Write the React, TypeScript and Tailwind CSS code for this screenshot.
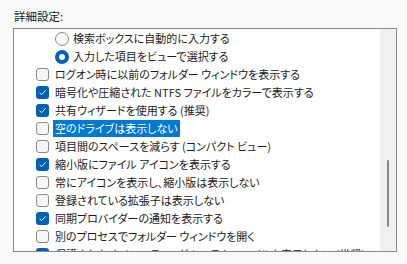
import type { ReactNode } from "react";

type Row =
  | { kind: "radio"; label: string; checked: boolean }
  | { kind: "check"; label: string; checked: boolean; selected?: boolean };

const rows: Row[] = [
  { kind: "radio", label: "検索ボックスに自動的に入力する", checked: false },
  { kind: "radio", label: "入力した項目をビューで選択する", checked: true },
  { kind: "check", label: "ログオン時に以前のフォルダー ウィンドウを表示する", checked: false },
  { kind: "check", label: "暗号化や圧縮された NTFS ファイルをカラーで表示する", checked: true },
  { kind: "check", label: "共有ウィザードを使用する (推奨)", checked: true },
  { kind: "check", label: "空のドライブは表示しない", checked: false, selected: true },
  { kind: "check", label: "項目間のスペースを減らす (コンパクト ビュー)", checked: false },
  { kind: "check", label: "縮小版にファイル アイコンを表示する", checked: true },
  { kind: "check", label: "常にアイコンを表示し、縮小版は表示しない", checked: false },
  { kind: "check", label: "登録されている拡張子は表示しない", checked: false },
  { kind: "check", label: "同期プロバイダーの通知を表示する", checked: true },
  { kind: "check", label: "別のプロセスでフォルダー ウィンドウを開く", checked: false },
  { kind: "check", label: "保護されたオペレーティング システム ファイルを表示しない (推奨)", checked: true },
];

function CheckBox({ checked }: { checked: boolean }) {
  if (checked) {
    return (
      <span className="flex h-[13px] w-[13px] shrink-0 items-center justify-center rounded-[3px] bg-[#005fb8]">
        <svg width="9" height="9" viewBox="0 0 9 9" fill="none">
          <path d="M1.8 4.9 L3.7 6.6 L7.3 2.6" stroke="white" strokeWidth="0.9" strokeLinecap="round" strokeLinejoin="round" />
        </svg>
      </span>
    );
  }
  return <span className="h-[13px] w-[13px] shrink-0 rounded-[3px] border border-[#8a8a8a] bg-[#f7f7f7]" />;
}

function Radio({ checked }: { checked: boolean }) {
  if (checked) {
    return (
      <span className="flex h-[14px] w-[14px] shrink-0 items-center justify-center rounded-full bg-[#005fb8]">
        <span className="h-[6px] w-[6px] rounded-full bg-white" />
      </span>
    );
  }
  return <span className="h-[14px] w-[14px] shrink-0 rounded-full border border-[#8a8a8a] bg-[#f7f7f7]" />;
}

function Label({ children, selected }: { children: ReactNode; selected?: boolean }) {
  return (
    <span
      className={`flex h-[17px] items-center whitespace-nowrap px-[2px] ${
        selected ? "bg-[#0078d4] text-white" : "text-[#1b1b1b]"
      }`}
    >
      {children}
    </span>
  );
}

export default function App() {
  return (
    <div
      className="h-[264px] w-[407px] overflow-hidden bg-[#f9f9f9] text-[11px] leading-none"
      style={{ fontFamily: '"Noto Sans CJK JP", "Noto Sans", sans-serif', fontFeatureSettings: '"palt"' }}
    >
      <p className="pl-[14px] pt-[11px] text-[11.5px] text-[#1b1b1b]">詳細設定:</p>
      <div className="ml-[13px] mt-[5px] flex h-[224px] w-[384px] border border-[#8a8a8a] bg-white">
        <ul className="min-w-0 flex-1 overflow-hidden pt-[1px]">
          {rows.map((row) =>
            row.kind === "radio" ? (
              <li key={row.label} className="flex h-[18px] items-center pl-[41px]">
                <Radio checked={row.checked} />
                <span className="w-[2px]" />
                <Label>{row.label}</Label>
              </li>
            ) : (
              <li key={row.label} className="flex h-[18px] items-center pl-[22px]">
                <CheckBox checked={row.checked} />
                <span className="w-[4px]" />
                <Label selected={row.selected}>{row.label}</Label>
              </li>
            ),
          )}
        </ul>
        <div className="flex w-[16px] shrink-0 justify-center bg-[#f0f0f0] pb-[1px]">
          <div className="mt-[131px] h-[67px] w-[2px] rounded-full bg-[#8a8a8a]" />
        </div>
      </div>
    </div>
  );
}
